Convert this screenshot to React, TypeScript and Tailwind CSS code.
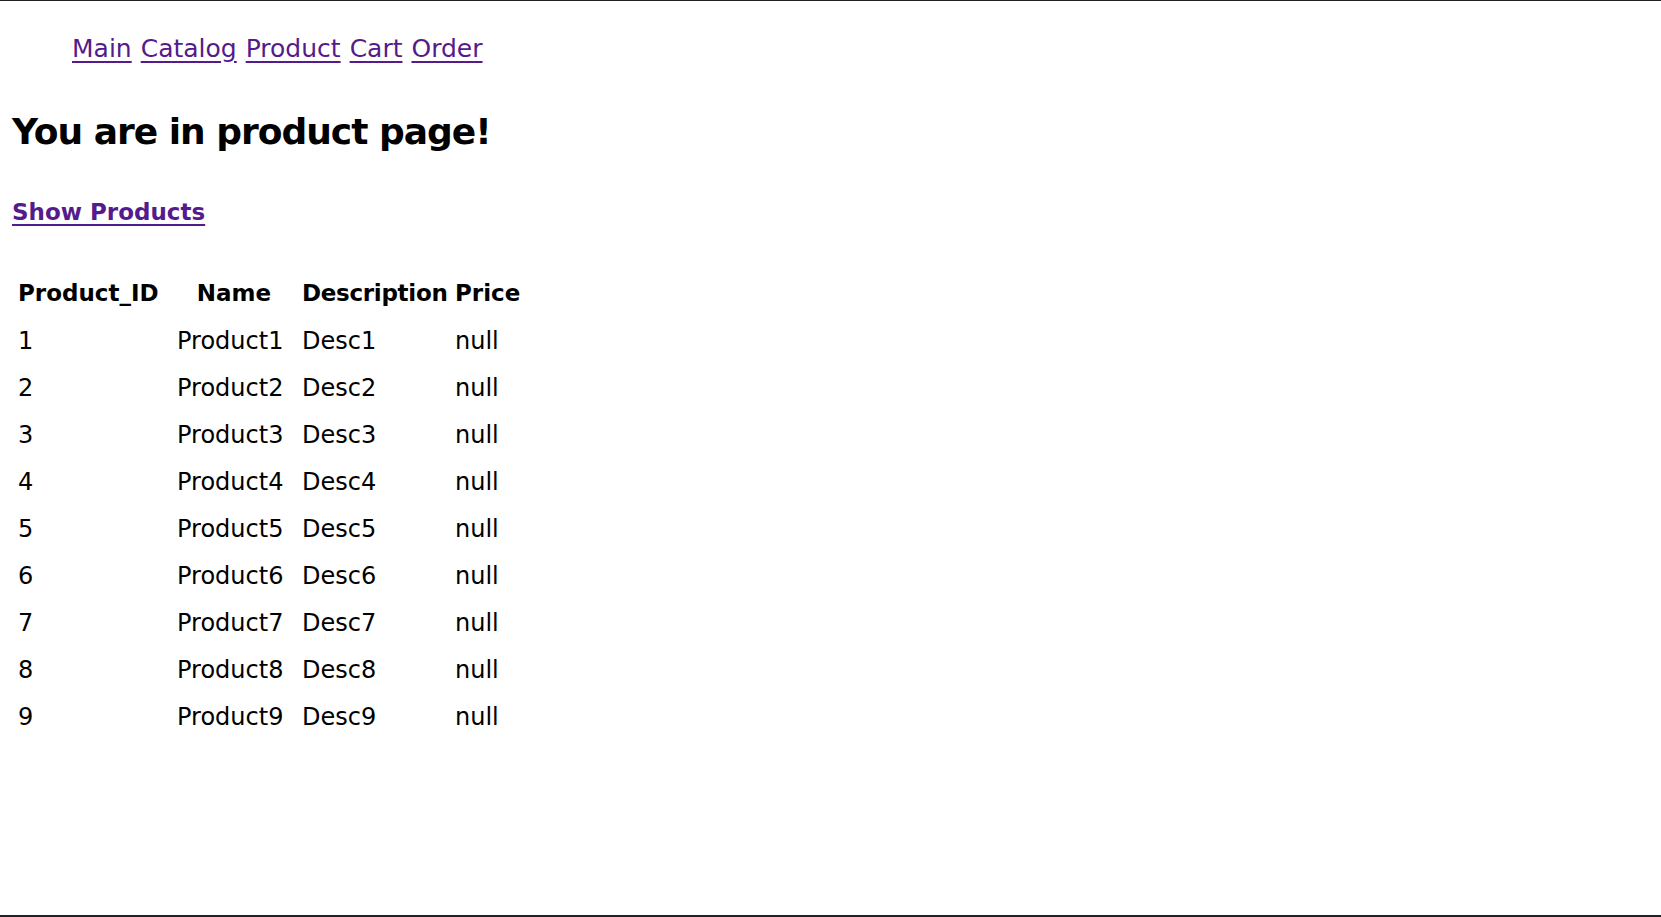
const links = ['Main', 'Catalog', 'Product', 'Cart', 'Order'];

const products = Array.from({ length: 9 }, (_, i) => ({
  id: i + 1,
  name: `Product${i + 1}`,
  desc: `Desc${i + 1}`,
  price: 'null',
}));

const App = () => {
  return (
    <div className="h-screen box-border border-t border-b-2 border-[#202124] bg-white text-black font-['DejaVu_Sans',sans-serif] overflow-hidden">
      {/* top nav */}
      <nav className="mt-[33px] ml-[72px] flex gap-[9px] text-[25px] leading-[30px]">
        {links.map(l => (
          <a key={l} href="#" className="text-[#551a8b] underline underline-offset-[4px]">
            {l}
          </a>
        ))}
      </nav>

      <h1 className="mt-[46px] ml-[12px] text-[36px] leading-[44px] font-bold tracking-[-1px]">
        You are in product page!
      </h1>

      <div className="mt-[43px] ml-[12px] text-[23px] leading-[30px] font-bold">
        <a href="#" className="text-[#551a8b] underline underline-offset-[4px]">Show Products</a>
      </div>

      {/* products table */}
      <div className="mt-[43px] ml-[18px] grid grid-cols-[159px_125px_153px_80px] text-[24px]">
        <div className="h-[47px] flex items-center text-[23px] font-bold">Product_ID</div>
        <div className="h-[47px] flex items-center justify-center pr-[11px] text-[23px] font-bold">Name</div>
        <div className="h-[47px] flex items-center text-[23px] font-bold tracking-[-0.3px]">Description</div>
        <div className="h-[47px] flex items-center text-[23px] font-bold">Price</div>
        {products.map(p => (
          <div key={p.id} className="contents">
            <div className="h-[47px] flex items-center">{p.id}</div>
            <div className="h-[47px] flex items-center">{p.name}</div>
            <div className="h-[47px] flex items-center">{p.desc}</div>
            <div className="h-[47px] flex items-center">{p.price}</div>
          </div>
        ))}
      </div>
    </div>
  );
};

export default App;
